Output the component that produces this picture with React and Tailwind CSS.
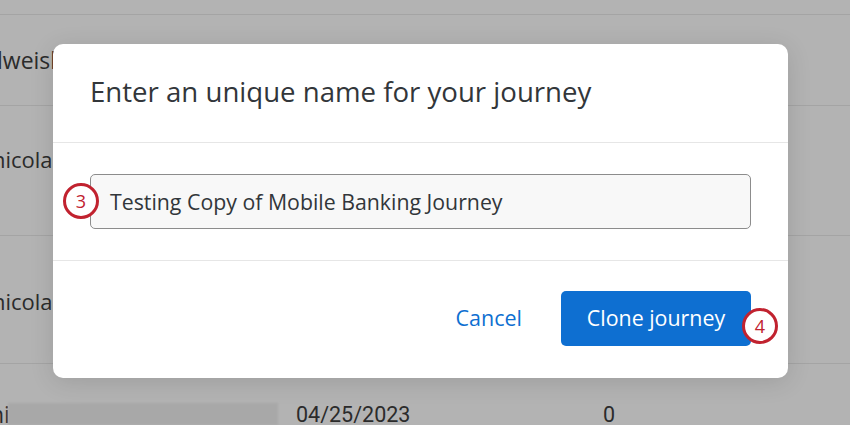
import React from 'react';

/**
 * Diálogo "Clone journey" sobre una tabla atenuada
 */
const Marker = ({ n, className }) => (
  <div
    className={`absolute w-[36px] h-[36px] rounded-full border-[3px] border-[#c1222f] bg-white flex items-center justify-center text-[#c1222f] text-[18px] leading-none ${className}`}
  >
    {n}
  </div>
);

const Row = ({ className, children }) => (
  <div className={`border-b border-[#a4a4a4] flex items-start ${className}`}>{children}</div>
);

export default function App() {
  return (
    <div
      className="relative w-[850px] h-[425px] overflow-hidden bg-[#b3b3b3] text-[#2b2b2b]"
      style={{ fontFamily: '"Open Sans", "Liberation Sans", sans-serif' }}
    >
      {/* Tabla de fondo */}
      <div className="flex flex-col text-[23px] leading-[31px]">
        <Row className="h-[15px]" />
        <Row className="h-[91px] pt-[30px]">
          <span className="-ml-[3px]">lweisbach</span>
        </Row>
        <Row className="h-[130px] pt-[38px]">
          <span className="-ml-[8px] text-[22px]">nicolas</span>
        </Row>
        <Row className="h-[128px] pt-[50px]">
          <span className="-ml-[8px] text-[22px]">nicolas</span>
        </Row>
        <div className="h-[61px] flex items-start pt-[35px]">
          <span className="-ml-[10px] w-[18px] overflow-hidden">ni</span>
          <div className="w-[270px] h-[22px] mt-[4px] bg-[#a8a8a8] blur-[1px]" />
          <span className="ml-[18px] w-[307px] text-[21.5px]" style={{ fontFamily: 'Roboto, sans-serif' }}>04/25/2023</span>
          <span className="text-[21.5px]" style={{ fontFamily: 'Roboto, sans-serif' }}>0</span>
        </div>
      </div>

      {/* Diálogo */}
      <div className="absolute left-[53px] top-[44px] w-[735px] h-[334px] rounded-[10px] bg-white flex flex-col shadow-[0_4px_24px_rgba(0,0,0,0.12)]">
        <div className="h-[99px] border-b border-[#e6e6e6] px-[37px] flex items-center">
          <h2 className="text-[27.6px] text-[#32363a] font-normal pb-[2px]">Enter an unique name for your journey</h2>
        </div>
        <div className="h-[118px] border-b border-[#e6e6e6] px-[37px] pt-[31px]">
          <div className="h-[55px] rounded-[5px] border border-[#8c8c8c] bg-[#f8f8f8] flex items-center px-[19px] text-[21.3px] text-[#32363a]">
            Testing Copy of Mobile Banking Journey
          </div>
        </div>
        <div className="flex-1 flex items-start justify-end px-[37px] pt-[30px] gap-[39px]">
          <button className="h-[55px] text-[21.5px] text-[#0e6fd1]">Cancel</button>
          <button className="h-[55px] w-[190px] rounded-[5px] bg-[#0e6fd1] text-white text-[21.4px]">Clone journey</button>
        </div>
      </div>

      <Marker n="3" className="left-[63px] top-[183px]" />
      <Marker n="4" className="left-[742px] top-[308px]" />
    </div>
  );
}
